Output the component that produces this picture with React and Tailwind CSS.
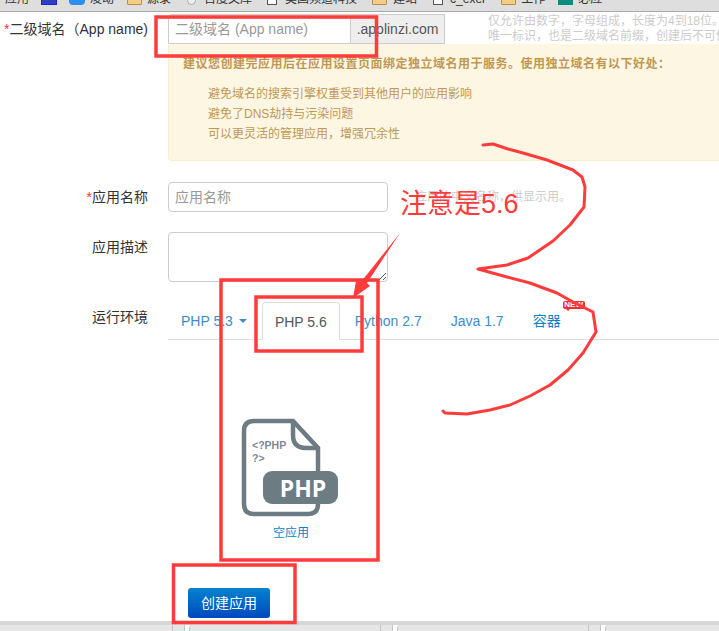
const Overlay = () => (
  <svg className="absolute left-0 top-0 pointer-events-none" width="719" height="631" viewBox="0 0 719 631">
    <g fill="none" stroke="#ff3b3b" strokeWidth="3.5">
      <rect x="156" y="17" width="220.5" height="39" />
      <rect x="221" y="280" width="157" height="280" />
      <rect x="256" y="297" width="106" height="54" />
      <rect x="173.5" y="565" width="121.5" height="57.5" />
    </g>
    <polygon points="400,233 367,283 370,286 353,298 356,281 361,282" fill="#ff3b3b" />
    <polyline
      points="483,145 493,144 508,149 523,153 547,160 573,170 582,177 585,187 584,207 570,225 553,241 528,258 507,265 478,269 507,277 530,283 557,293 573,302 593,312 596,332 583,353 568,370 550,385 530,396 510,405 490,410 467,414 445,413 443,411"
      fill="none"
      stroke="#ff3b3b"
      strokeWidth="3"
      strokeLinecap="round"
      strokeLinejoin="round"
    />
  </svg>
);

const PhpIcon = () => (
  <svg className="self-start" width="100" height="101" viewBox="0 0 100 101">
    <path
      d="M53 4 H14 Q4 4 4 14 V87 Q4 97 14 97 H68 Q78 97 78 87 V31 L53 4 Z"
      fill="none"
      stroke="#6d7b82"
      strokeWidth="4.5"
    />
    <path d="M53 4 V18 Q53 31 66 31 H78" fill="none" stroke="#6d7b82" strokeWidth="4.5" />
    <rect x="23" y="54" width="75" height="33" rx="9" fill="#6d7b82" />
    <text x="63" y="80" textAnchor="middle" fontSize="23" fontWeight="700" fill="#fff" fontFamily="'Open Sans', sans-serif">
      PHP
    </text>
    <text x="12" y="32" fontSize="10.5" fontWeight="700" fill="#7d8a90" fontFamily="'Liberation Sans', sans-serif">
      {"<?PHP"}
    </text>
    <text x="12" y="45" fontSize="10.5" fontWeight="700" fill="#7d8a90" fontFamily="'Liberation Sans', sans-serif">
      {"?>"}
    </text>
  </svg>
);

const Folder = ({ className }) => (
  <span className={`shrink-0 w-[15px] h-3 bg-[#f3cd85] border border-[#b98f45] rounded-[1px] ${className}`}></span>
);

const Box = ({ className }) => (
  <span className={`shrink-0 w-[10px] h-3 bg-white border border-[#555] ${className}`}></span>
);

const Label = ({ children, required }) => (
  <label className="w-[148px] shrink-0 whitespace-nowrap text-right text-[14px] leading-5 text-[#333]">
    {required && <span className="text-[#f33]">*</span>}
    {children}
  </label>
);

export default function App() {
  return (
    <div className="relative w-[719px] h-[631px] overflow-hidden bg-white font-['Liberation_Sans','Noto_Sans_CJK_SC',sans-serif]">
      {/* Bookmarks bar, only the bottom of it is in the shot */}
      <div className="h-3 bg-[#dedede] border-b border-[#a9a9a9] overflow-hidden flex items-end pb-[6px] pl-[5px] whitespace-nowrap text-[12px] leading-3 text-[#333]">
        <span className="shrink-0">应用</span>
        <span className="shrink-0 ml-3 w-4 h-3 bg-[#2f3fc0] border border-[#1c22dd]"></span>
        <span className="shrink-0 ml-3 w-4 h-3 bg-[#2e8ef0] rounded-sm"></span>
        <span className="shrink-0 ml-[5px]">凌动</span>
        <Folder className="ml-[13px]" />
        <span className="shrink-0 ml-[5px]">源录</span>
        <span className="shrink-0 ml-4 w-[9px] h-3 bg-[#eee] border border-[#aaa] rounded-full"></span>
        <span className="shrink-0 ml-2">百度文库</span>
        <Box className="ml-[15px]" />
        <span className="shrink-0 ml-2">美国频道科技</span>
        <Folder className="ml-[15px]" />
        <span className="shrink-0 ml-[6px]">建站</span>
        <Box className="ml-4" />
        <span className="shrink-0 ml-[7px]">c_exer</span>
        <Folder className="ml-[15px]" />
        <span className="shrink-0 ml-[5px]">工作</span>
        <span className="shrink-0 ml-[13px] w-[15px] h-3 bg-[#0f8a80]"></span>
        <span className="shrink-0 ml-[5px]">必应</span>
      </div>

      {/* Domain row */}
      <div className="flex items-center mt-[2px] h-[30px]">
        <Label required>二级域名（App name)</Label>
        <div className="flex shrink-0 ml-5 h-[30px] w-[277px]">
          <input
            className="w-[183px] px-[6px] text-[14px] border border-[#ccc] rounded-tl bg-white placeholder:text-[#999]"
            placeholder="二级域名 (App name)"
          />
          <div className="flex-1 flex items-center justify-center border border-l-0 border-[#ccc] bg-[#eee] text-[14px] text-[#555]">
            .applinzi.com
          </div>
        </div>
        <p className="shrink-0 ml-[43px] whitespace-nowrap text-[12px] leading-[15px] text-[#ccc]">
          仅允许由数字，字母组成，长度为4到18位。
          <br />
          唯一标识，也是二级域名前缀，创建后不可修改
        </p>
      </div>

      {/* Notice */}
      <div className="ml-[168px] h-[117px] bg-[#fdf6e3] border-l border-b border-[#f8edcc] rounded-bl px-[14px] pt-[10px] text-[#c09853] text-[12px]">
        <p className="font-bold leading-5 whitespace-nowrap tracking-[0.5px]">
          建议您创建完应用后在应用设置页面绑定独立域名用于服务。使用独立域名有以下好处：
        </p>
        <div className="mt-[10px] ml-[25px] leading-5 whitespace-nowrap">
          <p>避免域名的搜索引擎权重受到其他用户的应用影响</p>
          <p>避免了DNS劫持与污染问题</p>
          <p>可以更灵活的管理应用，增强冗余性</p>
        </div>
      </div>

      {/* App name */}
      <div className="flex items-center mt-[21px]">
        <Label required>应用名称</Label>
        <input
          className="ml-5 w-[220px] h-[30px] px-[6px] text-[14px] border border-[#ccc] rounded placeholder:text-[#999]"
          placeholder="应用名称"
        />
        <span className="ml-[27px] whitespace-nowrap text-[12px] text-[#ccc]">应用的中文名称，供显示用。</span>
      </div>

      {/* Description */}
      <div className="flex items-start mt-5">
        <div className="pt-[5px] flex">
          <Label>应用描述</Label>
        </div>
        <textarea className="ml-5 w-[220px] h-[50px] border border-[#ccc] rounded" />
      </div>

      {/* Runtime */}
      <div className="flex items-start mt-5">
        <div className="pt-[5px] flex">
          <Label>运行环境</Label>
        </div>
        <div className="ml-5 flex-1">
          <div className="h-[38px] flex gap-[2px] border-b border-[#ddd] text-[14px] text-[#3c8dcb]">
            <span className="h-[37px] pt-[1px] px-[13px] flex items-center gap-[6px]">
              PHP 5.3
              <span className="border-x-4 border-t-4 border-x-transparent border-t-[#3c8dcb]"></span>
            </span>
            <span className="h-[38px] pt-[1px] px-[12px] flex items-center bg-white border border-b-0 border-[#ddd] rounded-t text-[#555]">
              PHP 5.6
            </span>
            <span className="h-[37px] pt-[1px] pl-[13px] pr-[14px] flex items-center">Python 2.7</span>
            <span className="h-[37px] pt-[1px] pl-[13px] pr-[14px] flex items-center">Java 1.7</span>
            <span className="relative h-[37px] pt-[1px] px-[13px] flex items-center text-[#0a84c6]">
              容器
              <span className="absolute -top-[1px] left-[43px] h-2 w-[22px] flex items-center justify-center bg-[#f03030] rounded-[2px] text-white text-[8px] leading-2 font-bold">
                NEW
              </span>
              <span className="absolute top-[7px] left-[46px] border-x-2 border-t-2 border-x-transparent border-t-[#f03030]"></span>
            </span>
          </div>
        </div>
      </div>

      {/* Empty app */}
      <div className="ml-[240px] mt-[77px] w-[102px] flex flex-col items-center">
        <PhpIcon />
        <a className="mt-[7px] text-[12px] leading-4 text-[#0a84c6]">空应用</a>
      </div>

      <button className="block ml-[188px] mt-[47px] w-[82px] h-[30px] rounded-[3px] bg-gradient-to-b from-[#0a82cf] to-[#0048bd] text-white text-[14px]">
        创建应用
      </button>

      {/* Window bottom edge */}
      <div className="absolute left-0 right-0 bottom-0 h-[10px] bg-white border-t-4 border-[#d6d6d6] flex">
        <span className="w-[172px] bg-[#e6e6e6]"></span>
        <span className="w-[13px] bg-[#e6e6e6] border-x border-[#c4c4c4]"></span>
        <span className="ml-1 w-[191px] bg-[#e6e6e6] border-l border-[#c4c4c4] rounded-tl-sm"></span>
        <span className="w-[13px] bg-[#e6e6e6] border-x border-[#c4c4c4]"></span>
        <span className="ml-1 w-[191px] bg-[#e6e6e6] border-l border-[#c4c4c4] rounded-tl-sm"></span>
        <span className="w-[13px] bg-[#e6e6e6] border-x border-[#c4c4c4]"></span>
        <span className="ml-1 flex-1 bg-[#e6e6e6] border-l border-[#c4c4c4] rounded-tl-sm"></span>
      </div>

      <span className="absolute left-[400px] top-[186px] text-[27px] leading-9 whitespace-nowrap text-[#ff3b3b]">
        注意是5.6
      </span>
      <Overlay />
    </div>
  );
}
